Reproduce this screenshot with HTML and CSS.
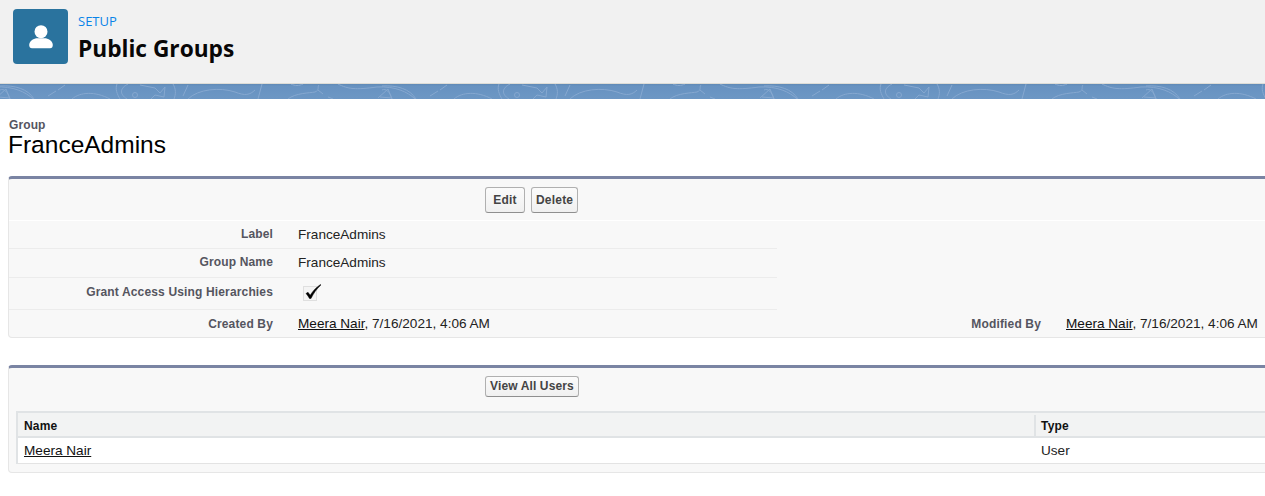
FILE: index.html
```html
<!DOCTYPE html>
<html lang="en">
<head>
<meta charset="utf-8">
<title>Public Groups</title>
<link rel="stylesheet" href="styles.css">
</head>
<body>
<header class="setup-header">
  <div class="setup-icon">
    <svg viewBox="0 0 24 24" width="24" height="24" aria-hidden="true"><circle cx="12" cy="6.700" r="6.500"/><path d="M0.200 20C0.200 16 5 13.300 8.500 13.300h7c3.500 0 8.300 2.700 8.300 6.700 0 2-1 3.300-2.800 3.300H3C1.200 23.300 0.200 22 0.200 20z"/></svg>
  </div>
  <div class="setup-titles">
    <div class="setup-kicker">SETUP</div>
    <h1 class="setup-title">Public Groups</h1>
  </div>
</header>
<svg class="band" viewBox="0 0 1265 15" aria-hidden="true">
  <defs>
    <g id="tile" fill="none" stroke="#86a8d0" stroke-width="1">
      <path d="M0 6C4 4 8 8 10 15M0 2C15 1 28 5 34 15M48 12L56 7M58 6L65 1M72 15C80 8 95 7 110 15"/>
      <path d="M117 0C115 5 117 10 120 15M128 0C120 4 119 10 127 15M140 1L155 4 160 9 165 3 164 13 155 11 151 15"/>
      <path d="M173 0C176 5 176 10 174 15M183 12L188 1M188 15C198 5 220 3 235 8 245 12 250 11 255 6M262 0L258 15"/>
      <path d="M288 15C295 9 310 9 315 8 320 6 317 3 319 1M291 0C295 2 299 2 303 0M318 6L323 10M328 13L333 15"/>
      <path d="M338 0C348 5 355 6 377 3 395 2 408 8 415 15M378 14L388 5 392 15M380 13L392 14"/>
      <circle cx="135" cy="11" r="2.500"/>
    </g>
  </defs>
  <use href="#tile" x="-382"/>
  <use href="#tile" x="0"/>
  <use href="#tile" x="382"/>
  <use href="#tile" x="764"/>
  <use href="#tile" x="1146"/>
</svg>
<main class="content">
  <div class="page-head">
    <div class="page-type">Group</div>
    <h2 class="page-name">FranceAdmins</h2>
  </div>

  <section class="panel detail-panel">
    <div class="button-row detail-buttons">
      <button class="btn" type="button">Edit</button>
      <button class="btn" type="button">Delete</button>
    </div>
    <div class="detail-row row-label">
      <div class="field-label">Label</div><div class="field-value">FranceAdmins</div>
    </div>
    <div class="detail-row row-name">
      <div class="field-label">Group Name</div><div class="field-value">FranceAdmins</div>
    </div>
    <div class="detail-row row-check">
      <div class="field-label">Grant Access Using Hierarchies</div>
      <div class="field-value">
        <svg class="checkbox" viewBox="0 0 18 18" width="18" height="18" aria-hidden="true"><rect class="checkbox-box" x="0.500" y="2.500" width="13" height="14"/><path class="checkbox-mark" d="M3 9.500l2-1.200 2.200 3C9.500 7.500 13 3.500 17.500 0.500l.4.600C13.500 5 10.500 9.500 8 14.500H6.500C5.500 12.800 4.500 11 3 9.500z"/></svg>
      </div>
    </div>
    <div class="detail-row audit-row">
      <div class="field-label">Created By</div>
      <div class="field-value audit-value"><a href="#">Meera Nair</a>, 7/16/2021, 4:06 AM</div>
      <div class="field-label modified-label">Modified By</div>
      <div class="field-value audit-value"><a href="#">Meera Nair</a>, 7/16/2021, 4:06 AM</div>
    </div>
  </section>

  <section class="panel list-panel">
    <div class="button-row list-buttons">
      <button class="btn" type="button">View All Users</button>
    </div>
    <div class="list-table">
      <div class="list-head">
        <div class="col-name">Name</div>
        <div class="col-type">Type</div>
      </div>
      <div class="list-row">
        <div class="col-name"><a href="#">Meera Nair</a></div>
        <div class="col-type">User</div>
      </div>
    </div>
  </section>
</main>
</body>
</html>
```

FILE: styles.css
```css
* { box-sizing: border-box; }

html, body {
  margin: 0;
  padding: 0;
  height: 100%;
  overflow: hidden;
  background: #fff;
}

body {
  font-family: "Liberation Sans", Arial, sans-serif;
  color: #222;
  width: 1265px;
}

.setup-header {
  height: 84px;
  background: #f1f1f1;
  border-bottom: 1px solid #dddcd6;
  display: flex;
  align-items: flex-start;
  padding: 9px 0 0 13px;
}

.setup-icon {
  width: 55px;
  height: 55px;
  background: #2a739e;
  border-radius: 4px;
  display: flex;
  align-items: center;
  justify-content: center;
  flex: none;
}

.setup-icon svg { fill: #fff; margin-top: 1px; }

.setup-titles { margin-left: 10px; }

.setup-kicker {
  font-family: "Open Sans", "Noto Sans", sans-serif;
  font-size: 13px;
  line-height: 16px;
  margin-top: 4px;
  color: #0a84e8;
}

.setup-title {
  font-family: "Open Sans", "Noto Sans", sans-serif;
  font-size: 22.700px;
  font-weight: 700;
  line-height: 30px;
  margin: 5px 0 0;
  color: #080707;
}

.band {
  display: block;
  width: 1265px;
  height: 15px;
  background: linear-gradient(#6089b6 0, #6792c1 2px, #6d97c4);
}

.content { padding: 20px 0 0 8px; }

.page-head { height: 57px; }

.page-type {
  font-size: 12px;
  font-weight: 700;
  line-height: 12px;
  color: #55555f;
  padding-left: 1px;
  letter-spacing: 0.1px;
}

.page-name {
  font-size: 24.500px;
  font-weight: 400;
  line-height: 28px;
  margin: 0;
  color: #000;
}

.panel {
  width: 1300px;
  background: #f8f8f8;
  border: 1px solid #e6e6e6;
  border-top: 3px solid #7a84a3;
  border-radius: 4px;
}

.detail-panel { height: 162px; }

.list-panel { margin-top: 27px; height: 108px; }

.button-row { display: flex; gap: 6px; padding-left: 476px; }

.detail-buttons {
  height: 42px;
  padding-top: 8px;
  border-bottom: 1px solid #fff;
}

.list-buttons { height: 43px; padding-top: 8px; }

.btn {
  font-family: "Liberation Sans", Arial, sans-serif;
  font-size: 12px;
  font-weight: 700;
  letter-spacing: 0.2px;
  height: 26px;
  padding: 0 4px;
  min-width: 40px;
  color: #444;
  background: linear-gradient(#fbfbfb, #f0f0f0);
  border: 1px solid #b0b0b0;
  border-bottom-color: #8f8f8f;
  border-radius: 3px;
}

.list-buttons .btn { height: 21px; padding: 0 4px 2px; letter-spacing: 0.13px; }

.detail-row {
  display: flex;
  align-items: center;
  width: 768px;
  padding-bottom: 2px;
  border-bottom: 1px solid #ececec;
}

.row-label { height: 28px; }
.row-name { height: 29px; }
.row-check { height: 32px; }

.audit-row {
  width: auto;
  height: 27px;
  padding-bottom: 0;
  border-bottom: 0;
}

.field-label {
  width: 264px;
  flex: none;
  text-align: right;
  font-size: 12px;
  font-weight: 700;
  color: #55555f;
  letter-spacing: 0.15px;
}

.field-value {
  padding-left: 25px;
  padding-top: 1px;
  font-size: 13.600px;
  color: #222;
}

.audit-value { width: 379px; flex: none; padding-top: 0; }

.modified-label { width: 389px; }

.row-check .field-label { margin-top: -2px; }

a { color: #111; text-decoration: underline; }

.checkbox { display: block; margin-left: 5px; }

.checkbox-box {
  fill: #f4f4f4;
  stroke: #c8c8c8;
  stroke-dasharray: 1 1;
}

.checkbox-mark { fill: #000; stroke: #000; stroke-width: 0.500; }

.list-table {
  margin-left: 7px;
  width: 1290px;
  border-left: 2px solid #e0e3e5;
  border-top: 2px solid #e0e3e5;
  font-size: 13.600px;
}

.list-head {
  display: flex;
  height: 25px;
  padding-top: 2px;
  align-items: center;
  background: #f2f3f3;
  border-bottom: 2px solid #e0e3e5;
  font-size: 12px;
  font-weight: 700;
  color: #111;
  letter-spacing: 0.2px;
}

.list-row {
  display: flex;
  height: 26px;
  padding-bottom: 1px;
  align-items: center;
  background: #fff;
  border-bottom: 1px solid #e3e3e3;
}

.col-name { width: 1016px; padding-left: 6px; flex: none; height: 100%; display: flex; align-items: center; }
.col-type { padding-left: 7px; height: 100%; display: flex; align-items: center; }
.list-head .col-type { border-left: 2px solid #e0e3e5; padding-left: 5px; }
```
